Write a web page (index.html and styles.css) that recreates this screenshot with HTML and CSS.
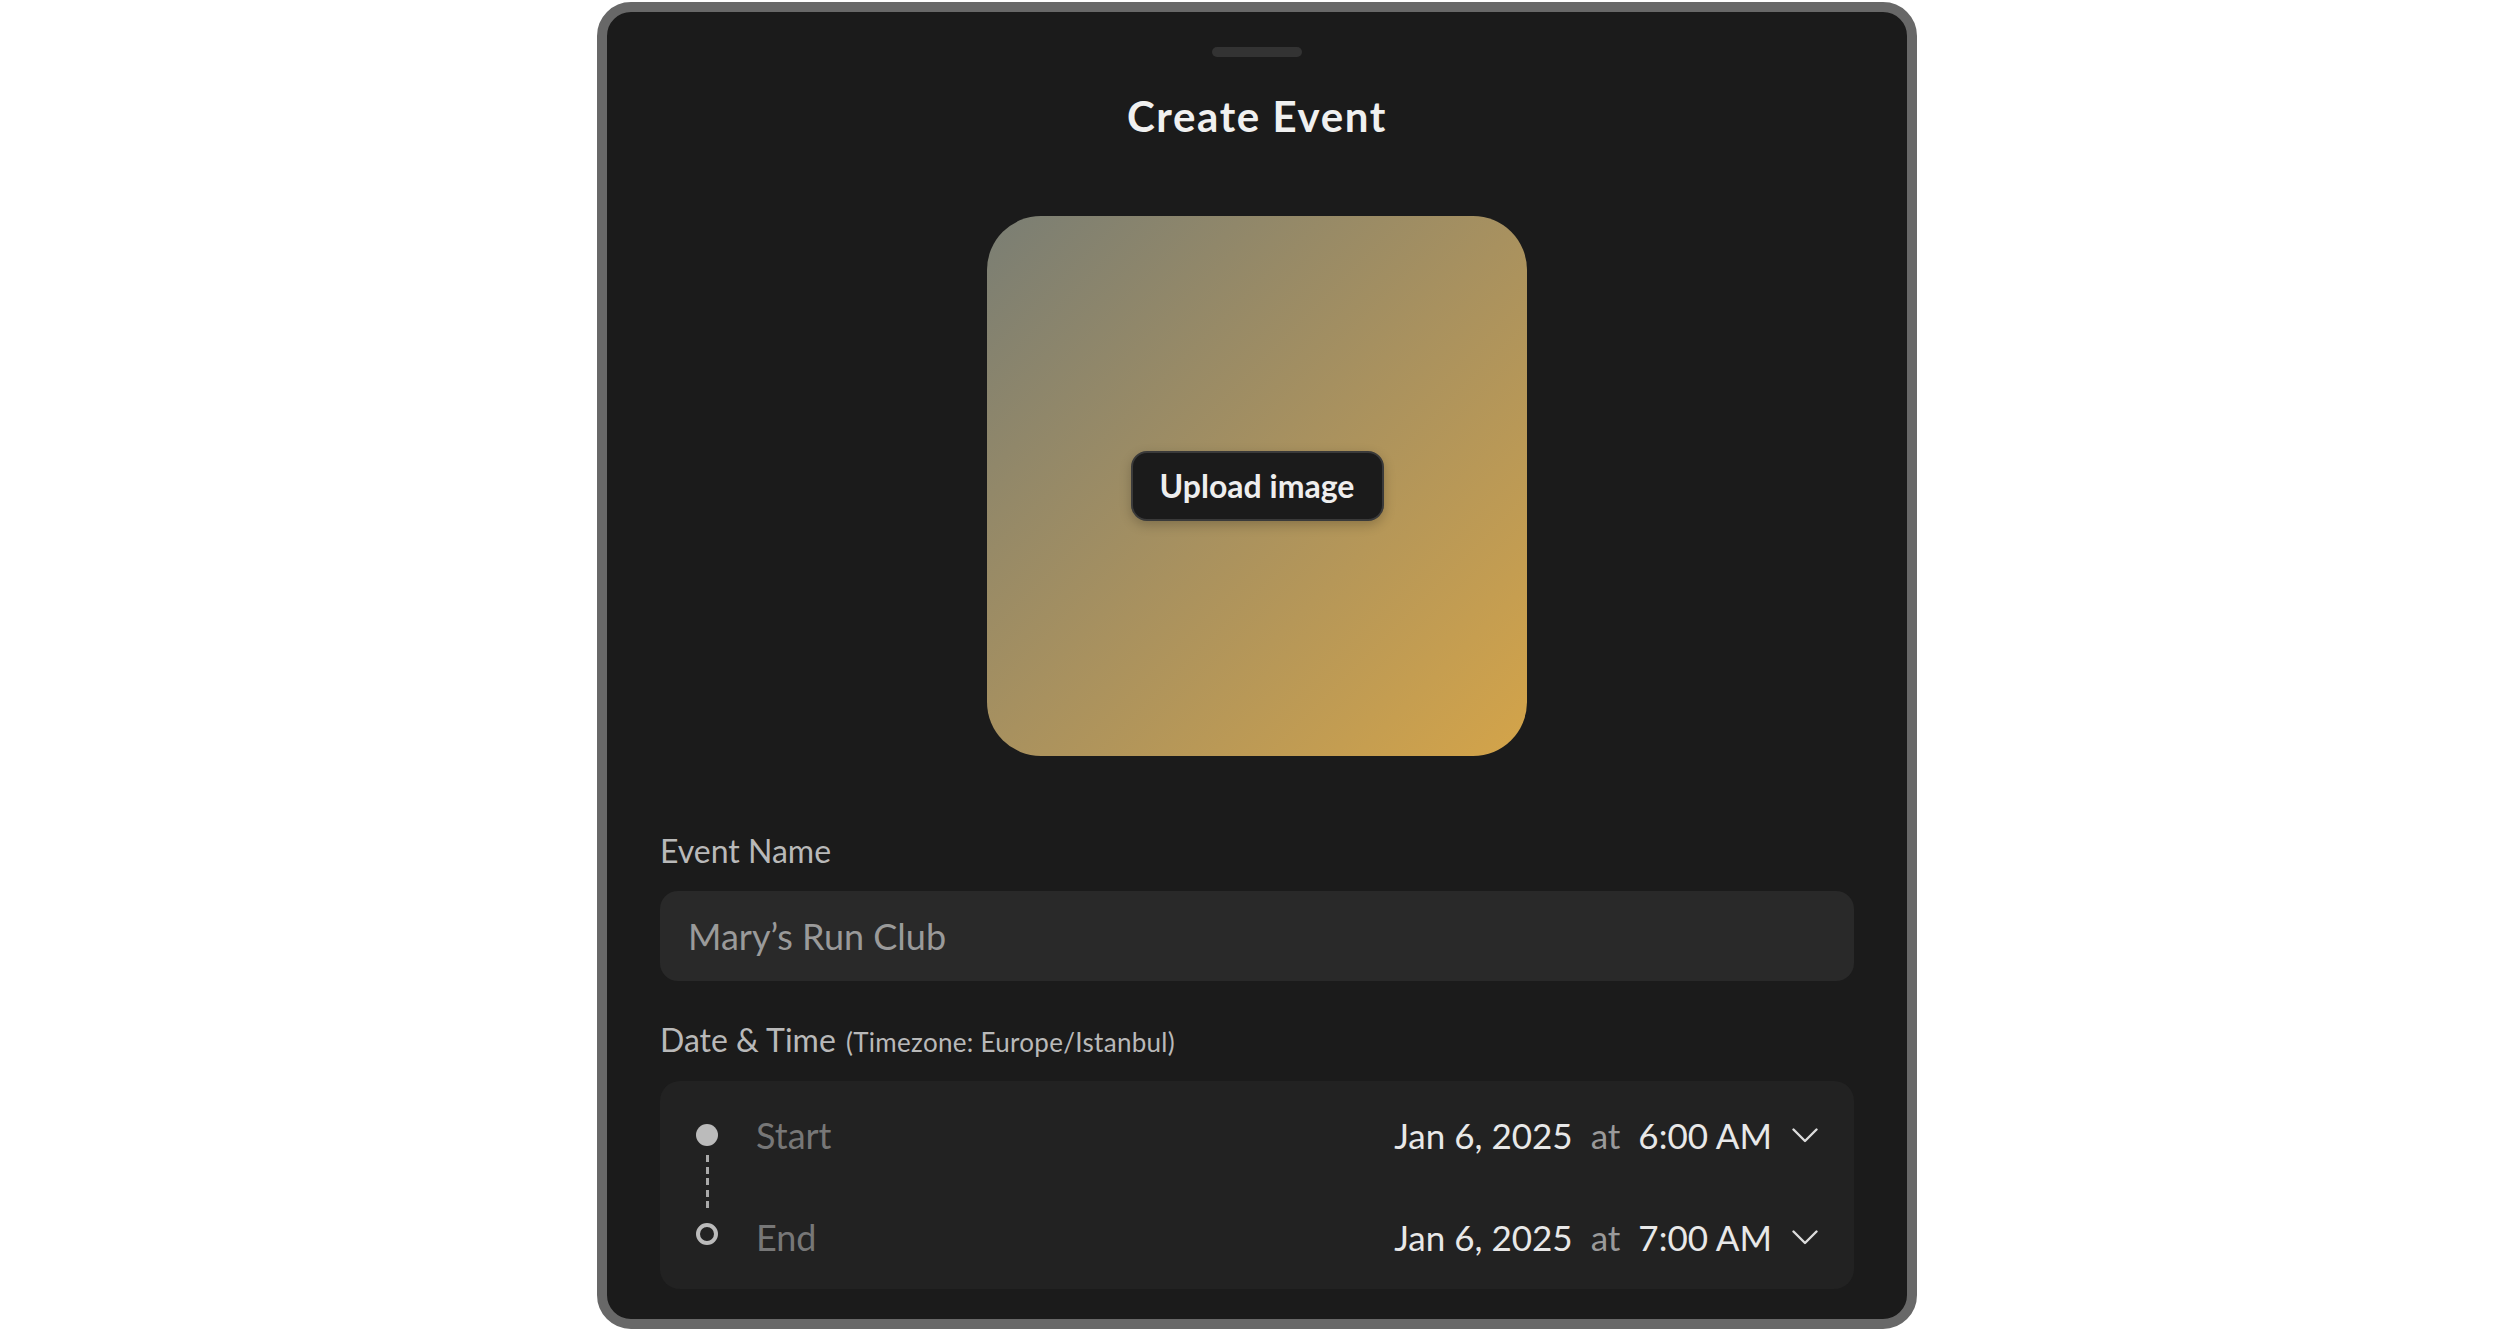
FILE: index.html
```html
<!DOCTYPE html>
<html lang="en">
<head>
<meta charset="utf-8">
<title>Create Event</title>
<link rel="stylesheet" href="styles.css">
</head>
<body>
<div class="device">
  <div class="sheet-handle"></div>
  <h1 class="sheet-title">Create Event</h1>

  <div class="cover">
    <button class="upload-btn" type="button">Upload image</button>
  </div>

  <div class="field-label">Event Name</div>
  <div class="text-input">Mary’s Run Club</div>

  <div class="field-label field-label-date">Date &amp; Time <span class="tz">(Timezone: Europe/Istanbul)</span></div>
  <div class="when">
    <div class="when-row">
      <span class="marker marker-start"></span>
      <span class="when-label">Start</span>
      <span class="when-value">
        <span class="when-date">Jan 6, 2025</span>
        <span class="when-at">at</span>
        <span class="when-time">6:00 AM</span>
        <svg class="chevron" width="26" height="15" viewBox="0 0 26 15"><polyline points="1.5,1.5 13,13 24.5,1.5" fill="none" stroke="#dcdcdc" stroke-width="2.4" stroke-linecap="round" stroke-linejoin="round"/></svg>
      </span>
    </div>
    <div class="connector"></div>
    <div class="when-row">
      <span class="marker marker-end"></span>
      <span class="when-label">End</span>
      <span class="when-value">
        <span class="when-date">Jan 6, 2025</span>
        <span class="when-at">at</span>
        <span class="when-time">7:00 AM</span>
        <svg class="chevron" width="26" height="15" viewBox="0 0 26 15"><polyline points="1.5,1.5 13,13 24.5,1.5" fill="none" stroke="#dcdcdc" stroke-width="2.4" stroke-linecap="round" stroke-linejoin="round"/></svg>
      </span>
    </div>
  </div>
</div>
</body>
</html>
```

FILE: styles.css
```css
html, body {
  margin: 0;
  padding: 0;
  background: #ffffff;
}

body {
  font-family: Lato, "Open Sans", "Liberation Sans", sans-serif;
}

.device {
  box-sizing: border-box;
  width: 1320px;
  height: 1327px;
  margin: 2px auto 0;
  border: 10px solid #686868;
  border-radius: 34px;
  background: #1b1b1b;
  padding: 35px 53px 0;
  display: flex;
  flex-direction: column;
  overflow: hidden;
}

.sheet-handle {
  align-self: center;
  width: 90px;
  height: 10px;
  border-radius: 5px;
  background: #333333;
}

.sheet-title {
  margin: 34px 0 0;
  font-size: 42px;
  line-height: 50px;
  font-weight: 700;
  text-align: center;
  color: #f0f0f0;
  letter-spacing: 1.6px;
}

.cover {
  align-self: center;
  width: 540px;
  height: 540px;
  margin-top: 75px;
  border-radius: 54px;
  background: linear-gradient(135deg, #7a7e74 0%, #a8915f 50%, #d4a449 100%);
  display: flex;
  align-items: center;
  justify-content: center;
}

.upload-btn {
  box-sizing: border-box;
  width: 253px;
  height: 70px;
  border: 2px solid #3a3a3a;
  border-radius: 16px;
  background: #1b1b1b;
  color: #eeeeee;
  font-family: Lato, "Open Sans", sans-serif;
  font-size: 32px;
  font-weight: 700;
  line-height: 40px;
  padding: 0;
  box-shadow: 0 4px 12px rgba(0, 0, 0, 0.22);
}

.field-label {
  margin-top: 75px;
  font-size: 32px;
  line-height: 40px;
  color: #b9b9b9;
}

.field-label-date {
  margin-top: 39px;
}

.tz {
  font-size: 26px;
  letter-spacing: 0.3px;
  margin-left: 2px;
}

.text-input {
  box-sizing: border-box;
  margin-top: 20px;
  height: 90px;
  border-radius: 18px;
  background: #292929;
  padding: 0 28px;
  display: flex;
  align-items: center;
  font-size: 36px;
  line-height: 46px;
  color: #9a9a9a;
}

.when {
  margin-top: 19px;
  border-radius: 20px;
  background: #222222;
  padding: 28px 36px 26px;
  display: flex;
  flex-direction: column;
}

.when-row {
  height: 52px;
  display: flex;
  align-items: center;
  font-size: 35px;
  line-height: 44px;
}

.marker {
  box-sizing: border-box;
  width: 22px;
  height: 22px;
  border-radius: 50%;
  flex: none;
}

.marker-start {
  background: #bbbbbb;
}

.marker-end {
  border: 4px solid #bbbbbb;
  margin-top: -6px;
}

.connector {
  width: 3px;
  height: 58px;
  margin: -6px 0 -2px 9.5px;
  background: repeating-linear-gradient(to bottom, #aaaaaa 0 7px, transparent 7px 11.6px);
}

.when-label {
  margin-left: 38px;
  font-size: 36px;
  color: #777777;
}

.when-value {
  margin-left: auto;
  display: flex;
  align-items: center;
  gap: 18px;
  color: #e8e8e8;
}

.when-at {
  color: #9a9a9a;
}

.chevron {
  display: block;
  margin-left: 2px;
}
```
